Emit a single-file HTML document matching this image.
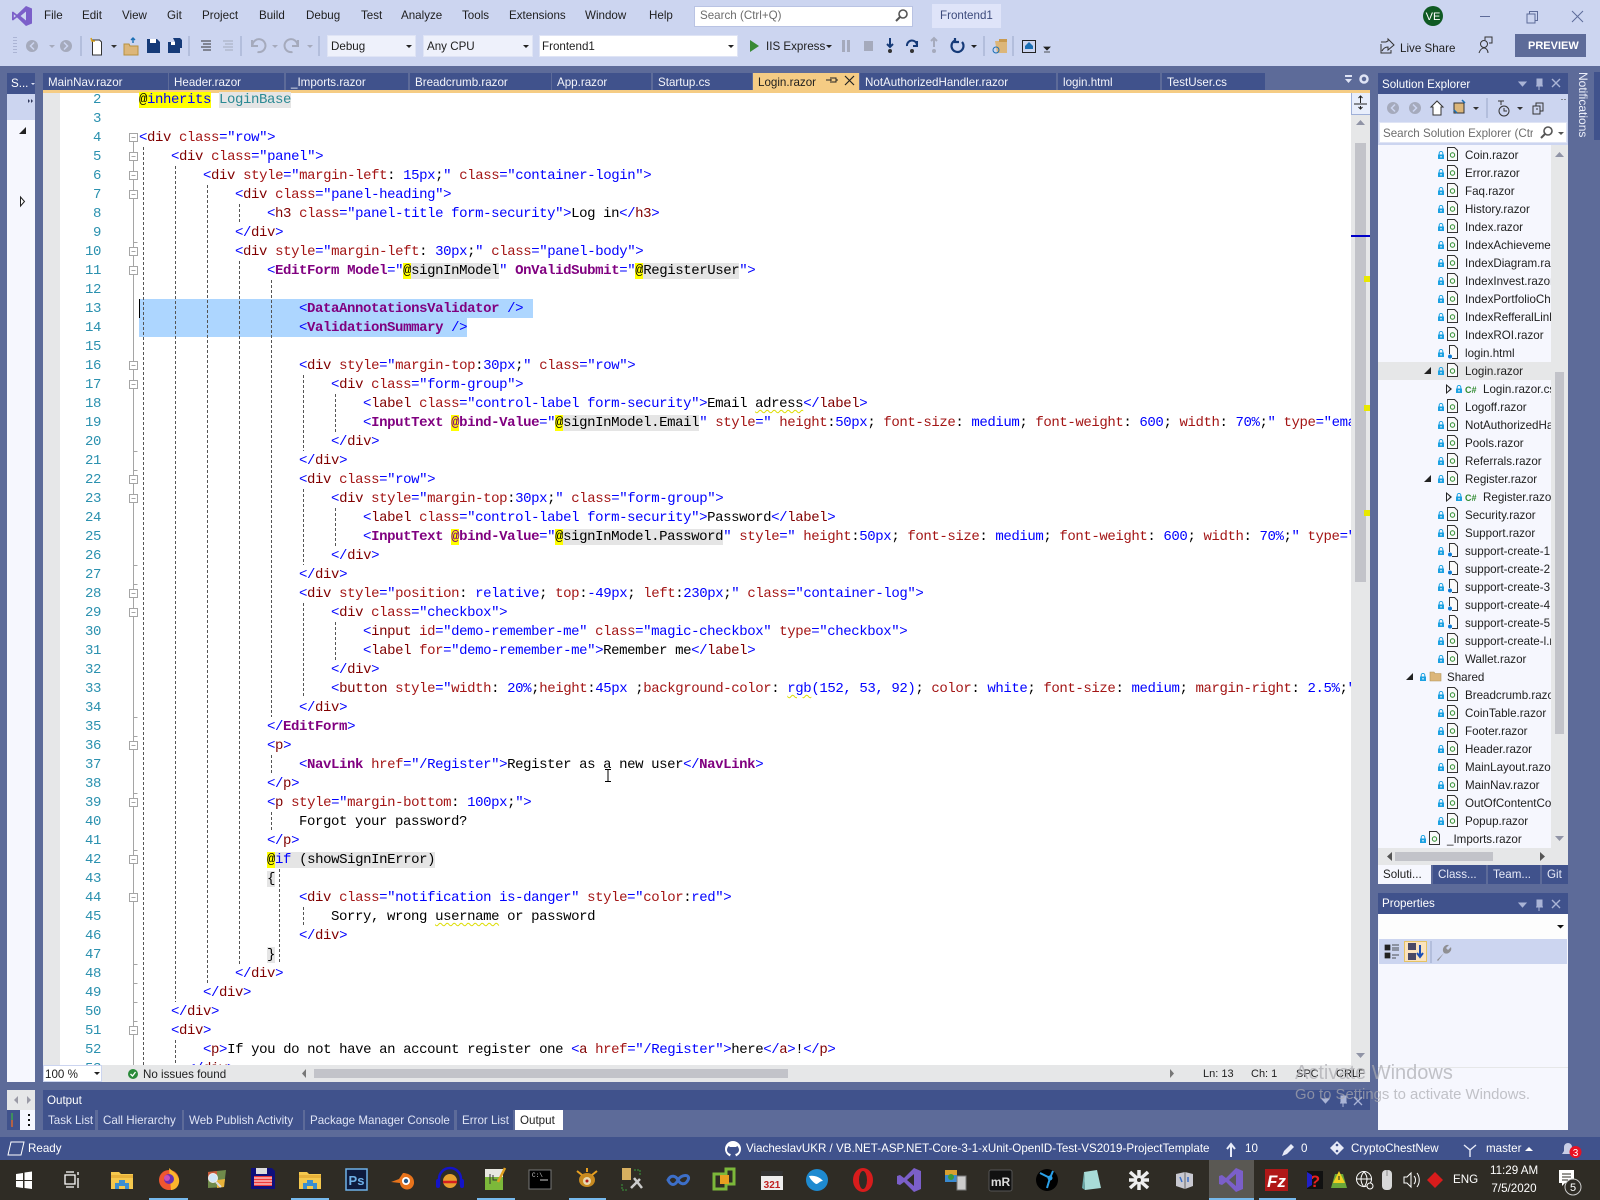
<!DOCTYPE html>
<html><head><meta charset="utf-8"><title>Login.razor - Frontend1</title>
<style>
*{box-sizing:border-box}
html,body{margin:0;padding:0;width:1600px;height:1200px;overflow:hidden;background:#5d6b99;font-family:"Liberation Sans",sans-serif;font-size:11.6px;color:#1e1e1e}
.x{position:absolute;white-space:nowrap;line-height:16px}
.bx{position:absolute}
.tab{position:absolute;top:73px;height:17px;background:#40528c;color:#f4f5fb;line-height:20px;padding-left:5px;white-space:nowrap;overflow:hidden}
.ot{position:absolute;top:1110px;height:20px;background:#40528c;color:#dfe4f5;line-height:21px;padding-left:5px;white-space:nowrap}
.st{position:absolute;top:865px;height:19px;background:#40528c;color:#e8ebf8;line-height:20px;padding-left:5px;white-space:nowrap}
#code,#nums{position:absolute;top:91px;height:974px;overflow:hidden;font:14px/19px "Liberation Mono",monospace;letter-spacing:-.4px;white-space:pre}
#code{left:139px;width:1212px;color:#000}
#nums{left:60px;width:41px;text-align:right;color:#2b91af}
#code div,#nums div{height:19px}
#code b{color:#00f;font-weight:normal}
#code i{color:#800000;font-style:normal}
#code u{color:#a31515;text-decoration:none}
#code s{color:#800080;font-weight:bold;text-decoration:none}
#code mark{background:#ff0;color:#000}
#code var{background:#e5e5e5;font-style:normal}
#code .w{text-decoration:underline wavy #dcdc00 1px;text-underline-offset:2px}
#tree{position:absolute;left:1378px;top:146px;width:173px;height:702px;overflow:hidden;color:#1e1e1e}
.r{margin:0;height:18px;line-height:20px;padding-left:60px;white-space:nowrap;position:relative}
.r svg{display:inline-block;vertical-align:-2px}
.r svg.a{width:6px;height:8px;margin-right:3px;vertical-align:0}
.r svg.c{width:11px;height:14px;margin-right:7px}
.s{padding-left:78px}.o{padding-left:42px}
.h{background:#e6e7e8}
.cs{display:inline-block;width:11px;margin-right:7px;color:#2f8a2f;font-weight:bold;font-size:9px}
.tri{position:absolute;top:5px;width:0;height:0}
.t1{border-left:7px solid transparent;border-bottom:7px solid #222;}
.t2{border-left:6px solid #222;border-top:5px solid transparent;border-bottom:5px solid transparent;top:4px}
.t2:after{content:"";position:absolute;left:-5px;top:-3px;border-left:3.500px solid #f6f7fe;border-top:3px solid transparent;border-bottom:3px solid transparent}
</style></head><body>

<svg width="0" height="0" style="position:absolute"><defs>
<symbol id="lk" viewBox="0 0 6 8"><path d="M1.2 3.5V2.2a1.8 1.8 0 0 1 3.6 0v1.3" fill="none" stroke="#1ba1e2"/><rect y="3.5" width="6" height="4.5" fill="#1ba1e2"/><rect x="2.4" y="5" width="1.2" height="1.5" fill="#fff"/></symbol>
<symbol id="doc" viewBox="0 0 11 14"><path d="M.5.5H7.5L10.5 3.5V13.5H.5Z" fill="#fafafa" stroke="#333"/><circle cx="5.5" cy="8" r="2.2" fill="none" stroke="#2a8a2a"/></symbol>
<symbol id="htm" viewBox="0 0 11 14"><path d="M2.5 9V.5H7.5L10.5 3.5V13.5H5" fill="#fafafa" stroke="#333"/><circle cx="3" cy="11.5" r="2" fill="#0a7ad6"/></symbol>
</defs></svg>

<!-- title / toolbar band -->
<div class="bx" style="left:0;top:0;width:1600px;height:66px;background:#ccd5f0"></div>
<span class="x" style="left:44px;top:8px">File</span>
<span class="x" style="left:82px;top:8px">Edit</span>
<span class="x" style="left:122px;top:8px">View</span>
<span class="x" style="left:167px;top:8px">Git</span>
<span class="x" style="left:202px;top:8px">Project</span>
<span class="x" style="left:259px;top:8px">Build</span>
<span class="x" style="left:306px;top:8px">Debug</span>
<span class="x" style="left:361px;top:8px">Test</span>
<span class="x" style="left:401px;top:8px">Analyze</span>
<span class="x" style="left:462px;top:8px">Tools</span>
<span class="x" style="left:509px;top:8px">Extensions</span>
<span class="x" style="left:585px;top:8px">Window</span>
<span class="x" style="left:649px;top:8px">Help</span>
<div class="bx" style="left:694px;top:6px;width:219px;height:21px;background:#fff;border:1px solid #b9c3e3"></div>
<span class="x" style="left:700px;top:8px;color:#6d6d6d">Search (Ctrl+Q)</span>
<div class="bx" style="left:932px;top:4px;width:69px;height:24px;background:#dfe4f9"></div>
<span class="x" style="left:940px;top:8px;color:#3c4a7c">Frontend1</span>

<div class="bx" style="left:327px;top:35px;width:89px;height:22px;background:#eef1fb;border:1px solid #dfe4f5"></div>
<span class="x" style="left:331px;top:39px">Debug</span>
<div class="bx" style="left:423px;top:35px;width:110px;height:22px;background:#eef1fb;border:1px solid #dfe4f5"></div>
<span class="x" style="left:427px;top:39px">Any CPU</span>
<div class="bx" style="left:539px;top:35px;width:199px;height:22px;background:#fff;border:1px solid #dfe4f5"></div>
<span class="x" style="left:542px;top:39px">Frontend1</span>
<span class="x" style="left:766px;top:39px">IIS Express</span>
<span class="x" style="left:1400px;top:41px">Live Share</span>
<div class="bx" style="left:1515px;top:34px;width:71px;height:23px;background:#5d6b99"></div>
<span class="x" style="left:1528px;top:38px;color:#fff;font-weight:bold;font-size:11px">PREVIEW</span>

<!-- tabs -->
<div class="bx" style="left:7px;top:73px;width:28px;height:21px;background:#40528c"></div>
<span class="x" style="left:11px;top:76px;color:#fff">S...</span>
<div class="tab" style="left:43px;width:125px">MainNav.razor</div>
<div class="tab" style="left:169px;width:115px">Header.razor</div>
<div class="tab" style="left:286px;width:122px">_Imports.razor</div>
<div class="tab" style="left:410px;width:141px">Breadcrumb.razor</div>
<div class="tab" style="left:552px;width:99px">App.razor</div>
<div class="tab" style="left:653px;width:99px">Startup.cs</div>
<div class="tab" style="left:753px;width:106px;background:#f5cc84;color:#1e1e1e;line-height:20px">Login.razor</div>
<div class="tab" style="left:860px;width:196px">NotAuthorizedHandler.razor</div>
<div class="tab" style="left:1058px;width:102px">login.html</div>
<div class="tab" style="left:1162px;width:103px">TestUser.cs</div>
<div class="bx" style="left:43px;top:90px;width:1327px;height:3px;background:#f5cc84"></div>

<!-- left rail -->
<div class="bx" style="left:7px;top:94px;width:28px;height:26px;background:#ccd5f0"></div>
<div class="bx" style="left:7px;top:120px;width:28px;height:962px;background:#f6f7fe"></div>
<div class="bx" style="left:7px;top:1090px;width:28px;height:20px;background:#e6e7e8"></div>
<div class="bx" style="left:7px;top:1110px;width:13px;height:20px;background:#40528c"></div>
<div class="bx" style="left:20px;top:1110px;width:15px;height:20px;background:#f6f7fe"></div>

<!-- editor -->
<div class="bx" style="left:43px;top:93px;width:1308px;height:972px;background:#fff"></div>
<div class="bx" style="left:43px;top:93px;width:17px;height:972px;background:#e6e7e8"></div>
<div class="bx" style="left:139px;top:299px;width:394px;height:19px;background:#add6ff"></div>
<div class="bx" style="left:139px;top:318px;width:328px;height:19px;background:#add6ff"></div>

<div id="nums"><div>2</div><div>3</div><div>4</div><div>5</div><div>6</div><div>7</div><div>8</div><div>9</div><div>10</div><div>11</div><div>12</div><div>13</div><div>14</div><div>15</div><div>16</div><div>17</div><div>18</div><div>19</div><div>20</div><div>21</div><div>22</div><div>23</div><div>24</div><div>25</div><div>26</div><div>27</div><div>28</div><div>29</div><div>30</div><div>31</div><div>32</div><div>33</div><div>34</div><div>35</div><div>36</div><div>37</div><div>38</div><div>39</div><div>40</div><div>41</div><div>42</div><div>43</div><div>44</div><div>45</div><div>46</div><div>47</div><div>48</div><div>49</div><div>50</div><div>51</div><div>52</div><div>53</div></div>

<svg class="bx" style="left:0;top:0" width="1600" height="1065" viewBox="0 0 1600 1065">
<g stroke="#555" stroke-width="1" stroke-dasharray="3 2" fill="none">
<path d="M143.5 147V1065M175.5 166V1002M175.5 1040V1065M207.5 185V983M239.5 204V223M239.5 261V964M271.5 280V717M271.5 755V774M271.5 812V831M279.5 869V964M303.5 375V451M303.5 489V565M303.5 603V698M303.5 907V926M335.5 394V432M335.5 508V546M335.5 622V660"/>
</g>
<g stroke="#a5a5a5" fill="#fff">
<path d="M133.5 142V1065" fill="none"/>
<path d="M133.5 242.5h4M133.5 451.5h4M133.5 470.5h4M133.5 565.5h4M133.5 584.5h4M133.5 717.5h4M133.5 736.5h4M133.5 793.5h4M133.5 850.5h4M133.5 964.5h4M133.5 983.5h4M133.5 1002.5h4M133.5 1021.5h4" fill="none"/>
<g id="bxs">
<path d="M129.5 133.5h8v8h-8zM131.5 137.5h4"/><path d="M129.5 152.5h8v8h-8zM131.5 156.5h4"/><path d="M129.5 171.5h8v8h-8zM131.5 175.5h4"/><path d="M129.5 190.5h8v8h-8zM131.5 194.5h4"/><path d="M129.5 247.5h8v8h-8zM131.5 251.5h4"/><path d="M129.5 266.5h8v8h-8zM131.5 270.5h4"/><path d="M129.5 361.5h8v8h-8zM131.5 365.5h4"/><path d="M129.5 380.5h8v8h-8zM131.5 384.5h4"/><path d="M129.5 475.5h8v8h-8zM131.5 479.5h4"/><path d="M129.5 494.5h8v8h-8zM131.5 498.5h4"/><path d="M129.5 589.5h8v8h-8zM131.5 593.5h4"/><path d="M129.5 608.5h8v8h-8zM131.5 612.5h4"/><path d="M129.5 741.5h8v8h-8zM131.5 745.5h4"/><path d="M129.5 798.5h8v8h-8zM131.5 802.5h4"/><path d="M129.5 855.5h8v8h-8zM131.5 859.5h4"/><path d="M129.5 893.5h8v8h-8zM131.5 897.5h4"/><path d="M129.5 1026.5h8v8h-8zM131.5 1030.5h4"/>
</g></g>
</svg>

<div id="code"><div><mark>@<b>inherits</b></mark> <var style="color:#2b8a94">LoginBase</var></div><div> </div><div><b>&lt;</b><i>div</i> <u>class</u><b>="row"&gt;</b></div><div>    <b>&lt;</b><i>div</i> <u>class</u><b>="panel"&gt;</b></div><div>        <b>&lt;</b><i>div</i> <u>style</u><b>="</b><u>margin-left</u>: <b>15px</b>;<b>"</b> <u>class</u><b>="container-login"&gt;</b></div><div>            <b>&lt;</b><i>div</i> <u>class</u><b>="panel-heading"&gt;</b></div><div>                <b>&lt;</b><i>h3</i> <u>class</u><b>="panel-title form-security"&gt;</b>Log in<b>&lt;/</b><i>h3</i><b>&gt;</b></div><div>            <b>&lt;/</b><i>div</i><b>&gt;</b></div><div>            <b>&lt;</b><i>div</i> <u>style</u><b>="</b><u>margin-left</u>: <b>30px</b>;<b>"</b> <u>class</u><b>="panel-body"&gt;</b></div><div>                <b>&lt;</b><s>EditForm</s> <s>Model</s><b>="</b><mark>@</mark><var>signInModel</var><b>"</b> <s>OnValidSubmit</s><b>="</b><mark>@</mark><var>RegisterUser</var><b>"&gt;</b></div><div> </div><div>                    <b>&lt;</b><s>DataAnnotationsValidator</s> <b>/&gt;</b></div><div>                    <b>&lt;</b><s>ValidationSummary</s> <b>/&gt;</b></div><div> </div><div>                    <b>&lt;</b><i>div</i> <u>style</u><b>="</b><u>margin-top</u>:<b>30px</b>;<b>"</b> <u>class</u><b>="row"&gt;</b></div><div>                        <b>&lt;</b><i>div</i> <u>class</u><b>="form-group"&gt;</b></div><div>                            <b>&lt;</b><i>label</i> <u>class</u><b>="control-label form-security"&gt;</b>Email <span class="w">adress</span><b>&lt;/</b><i>label</i><b>&gt;</b></div><div>                            <b>&lt;</b><s>InputText</s> <mark><s>@</s></mark><s>bind-Value</s><b>="</b><mark>@</mark><var>signInModel.Email</var><b>"</b> <u>style</u><b>="</b> <u>height</u>:<b>50px</b>; <u>font-size</u>: <b>medium</b>; <u>font-weight</u>: <b>600</b>; <u>width</u>: <b>70%</b>;<b>"</b> <u>type</u><b>="email"</b></div><div>                        <b>&lt;/</b><i>div</i><b>&gt;</b></div><div>                    <b>&lt;/</b><i>div</i><b>&gt;</b></div><div>                    <b>&lt;</b><i>div</i> <u>class</u><b>="row"&gt;</b></div><div>                        <b>&lt;</b><i>div</i> <u>style</u><b>="</b><u>margin-top</u>:<b>30px</b>;<b>"</b> <u>class</u><b>="form-group"&gt;</b></div><div>                            <b>&lt;</b><i>label</i> <u>class</u><b>="control-label form-security"&gt;</b>Password<b>&lt;/</b><i>label</i><b>&gt;</b></div><div>                            <b>&lt;</b><s>InputText</s> <mark><s>@</s></mark><s>bind-Value</s><b>="</b><mark>@</mark><var>signInModel.Password</var><b>"</b> <u>style</u><b>="</b> <u>height</u>:<b>50px</b>; <u>font-size</u>: <b>medium</b>; <u>font-weight</u>: <b>600</b>; <u>width</u>: <b>70%</b>;<b>"</b> <u>type</u><b>="password"</b></div><div>                        <b>&lt;/</b><i>div</i><b>&gt;</b></div><div>                    <b>&lt;/</b><i>div</i><b>&gt;</b></div><div>                    <b>&lt;</b><i>div</i> <u>style</u><b>="</b><u>position</u>: <b>relative</b>; <u>top</u>:<b>-49px</b>; <u>left</u>:<b>230px</b>;<b>"</b> <u>class</u><b>="container-log"&gt;</b></div><div>                        <b>&lt;</b><i>div</i> <u>class</u><b>="checkbox"&gt;</b></div><div>                            <b>&lt;</b><i>input</i> <u>id</u><b>="demo-remember-me"</b> <u>class</u><b>="magic-checkbox"</b> <u>type</u><b>="checkbox"&gt;</b></div><div>                            <b>&lt;</b><i>label</i> <u>for</u><b>="demo-remember-me"&gt;</b>Remember me<b>&lt;/</b><i>label</i><b>&gt;</b></div><div>                        <b>&lt;/</b><i>div</i><b>&gt;</b></div><div>                        <b>&lt;</b><i>button</i> <u>style</u><b>="</b><u>width</u>: <b>20%</b>;<u>height</u>:<b>45px</b> ;<u>background-color</u>: <b><span class="w">rgb</span>(152, 53, 92)</b>; <u>color</u>: <b>white</b>; <u>font-size</u>: <b>medium</b>; <u>margin-right</u>: <b>2.5%</b>;<b>"</b> <u>type</u></div><div>                    <b>&lt;/</b><i>div</i><b>&gt;</b></div><div>                <b>&lt;/</b><s>EditForm</s><b>&gt;</b></div><div>                <b>&lt;</b><i>p</i><b>&gt;</b></div><div>                    <b>&lt;</b><s>NavLink</s> <u>href</u><b>="/Register"&gt;</b>Register as a new user<b>&lt;/</b><s>NavLink</s><b>&gt;</b></div><div>                <b>&lt;/</b><i>p</i><b>&gt;</b></div><div>                <b>&lt;</b><i>p</i> <u>style</u><b>="</b><u>margin-bottom</u>: <b>100px</b>;<b>"&gt;</b></div><div>                    Forgot your password?</div><div>                <b>&lt;/</b><i>p</i><b>&gt;</b></div><div>                <mark>@</mark><var><b>if</b> (showSignInError)</var></div><div>                <var>{</var></div><div>                    <b>&lt;</b><i>div</i> <u>class</u><b>="notification is-danger"</b> <u>style</u><b>="</b><u>color</u>:<b>red</b><b>"&gt;</b></div><div>                        Sorry, wrong <span class="w">username</span> or password</div><div>                    <b>&lt;/</b><i>div</i><b>&gt;</b></div><div>                <var>}</var></div><div>            <b>&lt;/</b><i>div</i><b>&gt;</b></div><div>        <b>&lt;/</b><i>div</i><b>&gt;</b></div><div>    <b>&lt;/</b><i>div</i><b>&gt;</b></div><div>    <b>&lt;</b><i>div</i><b>&gt;</b></div><div>        <b>&lt;</b><i>p</i><b>&gt;</b>If you do not have an account register one <b>&lt;</b><i>a</i> <u>href</u><b>="/Register"&gt;</b>here<b>&lt;/</b><i>a</i><b>&gt;</b>!<b>&lt;/</b><i>p</i><b>&gt;</b></div><div>      <b>&lt;/</b><i>div</i><b>&gt;</b></div></div>

<!-- scrollbar -->
<div class="bx" style="left:1351px;top:93px;width:19px;height:972px;background:#e6e7e8"></div>
<div class="bx" style="left:1351px;top:93px;width:19px;height:22px;background:#e8eefc;border-left:1px solid #9fb0d8;border-bottom:1px solid #9fb0d8"></div>
<div class="bx" style="left:1355px;top:143px;width:11px;height:439px;background:#c2c3c9"></div>
<div class="bx" style="left:1351px;top:235px;width:19px;height:2px;background:#0000c8"></div>
<div class="bx" style="left:1364px;top:276px;width:6px;height:6px;background:#e8e800"></div>
<div class="bx" style="left:1364px;top:405px;width:6px;height:6px;background:#e8e800"></div>
<div class="bx" style="left:1364px;top:510px;width:6px;height:6px;background:#e8e800"></div>

<!-- editor status strip -->
<div class="bx" style="left:43px;top:1065px;width:1327px;height:17px;background:#e6e7e8"></div>
<div class="bx" style="left:43px;top:1065px;width:59px;height:17px;background:#fff;border:1px solid #ccd5f0"></div>
<span class="x" style="left:45px;top:1067px">100 %</span>
<span class="x" style="left:143px;top:1067px">No issues found</span>
<div class="bx" style="left:314px;top:1069px;width:474px;height:9px;background:#c2c3c9"></div>
<span class="x" style="left:1203px;top:1066px;font-size:11px">Ln: 13</span>
<span class="x" style="left:1251px;top:1066px;font-size:11px">Ch: 1</span>
<span class="x" style="left:1296px;top:1066px;font-size:11px">SPC</span>
<span class="x" style="left:1336px;top:1066px;font-size:11px">CRLF</span>

<!-- output -->
<div class="bx" style="left:43px;top:1090px;width:1327px;height:20px;background:#40528c"></div>
<span class="x" style="left:47px;top:1093px;color:#fff">Output</span>
<div class="ot" style="left:43px;width:52px">Task List</div>
<div class="ot" style="left:98px;width:84px">Call Hierarchy</div>
<div class="ot" style="left:184px;width:119px">Web Publish Activity</div>
<div class="ot" style="left:305px;width:149px">Package Manager Console</div>
<div class="ot" style="left:457px;width:56px">Error List</div>
<div class="ot" style="left:515px;width:48px;background:#fff;color:#1e1e1e">Output</div>

<!-- solution explorer -->
<div class="bx" style="left:1378px;top:73px;width:190px;height:21px;background:#40528c"></div>
<span class="x" style="left:1382px;top:77px;color:#fff">Solution Explorer</span>
<div class="bx" style="left:1378px;top:94px;width:190px;height:51px;background:#ccd5f0"></div>
<div class="bx" style="left:1379px;top:122px;width:188px;height:21px;background:#fff;border:1px solid #dfe4f5"></div>
<span class="x" style="left:1383px;top:126px;width:150px;overflow:hidden;color:#6d6d6d">Search Solution Explorer (Ctrl+;)</span>
<div class="bx" style="left:1378px;top:145px;width:173px;height:703px;background:#f6f7fe"></div>
<div class="bx" style="left:1551px;top:145px;width:17px;height:703px;background:#e6e7e8"></div>
<div class="bx" style="left:1555px;top:372px;width:9px;height:362px;background:#c2c3c9"></div>
<div id="tree">
<p class="r"><svg class="a"><use href="#lk"/></svg><svg class="c"><use href="#doc"/></svg>Coin.razor</p>
<p class="r"><svg class="a"><use href="#lk"/></svg><svg class="c"><use href="#doc"/></svg>Error.razor</p>
<p class="r"><svg class="a"><use href="#lk"/></svg><svg class="c"><use href="#doc"/></svg>Faq.razor</p>
<p class="r"><svg class="a"><use href="#lk"/></svg><svg class="c"><use href="#doc"/></svg>History.razor</p>
<p class="r"><svg class="a"><use href="#lk"/></svg><svg class="c"><use href="#doc"/></svg>Index.razor</p>
<p class="r"><svg class="a"><use href="#lk"/></svg><svg class="c"><use href="#doc"/></svg>IndexAchievement.razor</p>
<p class="r"><svg class="a"><use href="#lk"/></svg><svg class="c"><use href="#doc"/></svg>IndexDiagram.razor</p>
<p class="r"><svg class="a"><use href="#lk"/></svg><svg class="c"><use href="#doc"/></svg>IndexInvest.razor</p>
<p class="r"><svg class="a"><use href="#lk"/></svg><svg class="c"><use href="#doc"/></svg>IndexPortfolioChart.razor</p>
<p class="r"><svg class="a"><use href="#lk"/></svg><svg class="c"><use href="#doc"/></svg>IndexRefferalLink.razor</p>
<p class="r"><svg class="a"><use href="#lk"/></svg><svg class="c"><use href="#doc"/></svg>IndexROI.razor</p>
<p class="r"><svg class="a"><use href="#lk"/></svg><svg class="c"><use href="#htm"/></svg>login.html</p>
<p class="r h"><span class="tri t1" style="left:46px"></span><svg class="a"><use href="#lk"/></svg><svg class="c"><use href="#doc"/></svg>Login.razor</p>
<p class="r s"><span class="tri t2" style="left:68px"></span><svg class="a"><use href="#lk"/></svg><span class="cs">C#</span>Login.razor.cs</p>
<p class="r"><svg class="a"><use href="#lk"/></svg><svg class="c"><use href="#doc"/></svg>Logoff.razor</p>
<p class="r"><svg class="a"><use href="#lk"/></svg><svg class="c"><use href="#doc"/></svg>NotAuthorizedHandler.razor</p>
<p class="r"><svg class="a"><use href="#lk"/></svg><svg class="c"><use href="#doc"/></svg>Pools.razor</p>
<p class="r"><svg class="a"><use href="#lk"/></svg><svg class="c"><use href="#doc"/></svg>Referrals.razor</p>
<p class="r"><span class="tri t1" style="left:46px"></span><svg class="a"><use href="#lk"/></svg><svg class="c"><use href="#doc"/></svg>Register.razor</p>
<p class="r s"><span class="tri t2" style="left:68px"></span><svg class="a"><use href="#lk"/></svg><span class="cs">C#</span>Register.razor.cs</p>
<p class="r"><svg class="a"><use href="#lk"/></svg><svg class="c"><use href="#doc"/></svg>Security.razor</p>
<p class="r"><svg class="a"><use href="#lk"/></svg><svg class="c"><use href="#doc"/></svg>Support.razor</p>
<p class="r"><svg class="a"><use href="#lk"/></svg><svg class="c"><use href="#htm"/></svg>support-create-1.html</p>
<p class="r"><svg class="a"><use href="#lk"/></svg><svg class="c"><use href="#htm"/></svg>support-create-2.html</p>
<p class="r"><svg class="a"><use href="#lk"/></svg><svg class="c"><use href="#htm"/></svg>support-create-3.html</p>
<p class="r"><svg class="a"><use href="#lk"/></svg><svg class="c"><use href="#htm"/></svg>support-create-4.html</p>
<p class="r"><svg class="a"><use href="#lk"/></svg><svg class="c"><use href="#htm"/></svg>support-create-5.html</p>
<p class="r"><svg class="a"><use href="#lk"/></svg><svg class="c"><use href="#doc"/></svg>support-create-l.razor</p>
<p class="r"><svg class="a"><use href="#lk"/></svg><svg class="c"><use href="#doc"/></svg>Wallet.razor</p>
<p class="r o"><span class="tri t1" style="left:28px"></span><svg class="a"><use href="#lk"/></svg><svg class="c" viewBox="0 0 11 14" style="width:13px;margin-right:5px"><path d="M0 3H4L5 4.5H11V12H0Z" fill="#dcb67a" stroke="#b0935a" stroke-width=".6"/></svg>Shared</p>
<p class="r"><svg class="a"><use href="#lk"/></svg><svg class="c"><use href="#doc"/></svg>Breadcrumb.razor</p>
<p class="r"><svg class="a"><use href="#lk"/></svg><svg class="c"><use href="#doc"/></svg>CoinTable.razor</p>
<p class="r"><svg class="a"><use href="#lk"/></svg><svg class="c"><use href="#doc"/></svg>Footer.razor</p>
<p class="r"><svg class="a"><use href="#lk"/></svg><svg class="c"><use href="#doc"/></svg>Header.razor</p>
<p class="r"><svg class="a"><use href="#lk"/></svg><svg class="c"><use href="#doc"/></svg>MainLayout.razor</p>
<p class="r"><svg class="a"><use href="#lk"/></svg><svg class="c"><use href="#doc"/></svg>MainNav.razor</p>
<p class="r"><svg class="a"><use href="#lk"/></svg><svg class="c"><use href="#doc"/></svg>OutOfContentCoin.razor</p>
<p class="r"><svg class="a"><use href="#lk"/></svg><svg class="c"><use href="#doc"/></svg>Popup.razor</p>
<p class="r o"><svg class="a"><use href="#lk"/></svg><svg class="c"><use href="#doc"/></svg>_Imports.razor</p>
</div>
<div class="bx" style="left:1378px;top:848px;width:190px;height:17px;background:#e6e7e8"></div>
<div class="bx" style="left:1395px;top:852px;width:98px;height:9px;background:#c2c3c9"></div>
<div class="st" style="left:1378px;width:53px;background:#f6f7fe;color:#1e1e1e">Soluti...</div>
<div class="st" style="left:1433px;width:53px">Class...</div>
<div class="st" style="left:1488px;width:52px">Team...</div>
<div class="st" style="left:1542px;width:26px">Git</div>

<!-- properties -->
<div class="bx" style="left:1378px;top:893px;width:190px;height:21px;background:#40528c"></div>
<span class="x" style="left:1382px;top:896px;color:#fff">Properties</span>
<div class="bx" style="left:1378px;top:914px;width:190px;height:216px;background:#f6f7fe"></div>
<div class="bx" style="left:1379px;top:914px;width:188px;height:25px;background:#fdfdfd"></div>
<div class="bx" style="left:1379px;top:939px;width:188px;height:25px;background:#ccd5f0"></div>
<div class="bx" style="left:1378px;top:1067px;width:190px;height:1px;background:#e6e7e8"></div>
<div class="bx" style="left:1404px;top:941px;width:23px;height:21px;background:#fbe3bd;border:1px solid #e5c365"></div>

<!-- notifications -->
<div class="bx" style="left:1594px;top:72px;width:6px;height:68px;background:#40528c"></div>
<span class="bx" style="left:1575px;top:72px;writing-mode:vertical-rl;color:#eceffa;font-size:12px;line-height:16px;white-space:nowrap">Notifications</span>

<!-- status bar -->
<div class="bx" style="left:0;top:1137px;width:1600px;height:23px;background:#40528c"></div>
<span class="x" style="left:28px;top:1141px;color:#fff">Ready</span>
<span class="x" style="left:746px;top:1141px;color:#fff">ViacheslavUKR / VB.NET-ASP.NET-Core-3-1-xUnit-OpenID-Test-VS2019-ProjectTemplate</span>
<span class="x" style="left:1245px;top:1141px;color:#fff">10</span>
<span class="x" style="left:1301px;top:1141px;color:#fff">0</span>
<span class="x" style="left:1351px;top:1141px;color:#fff">CryptoChestNew</span>
<span class="x" style="left:1486px;top:1141px;color:#fff">master</span>

<!-- taskbar -->
<div class="bx" style="left:0;top:1160px;width:1600px;height:40px;background:#2f2c25"></div>
<div class="bx" style="left:1209px;top:1160px;width:45px;height:40px;background:#5a5853"></div>
<div class="bx" style="left:149px;top:1198px;width:39px;height:2px;background:#76b9ed"></div>
<div class="bx" style="left:291px;top:1198px;width:38px;height:2px;background:#76b9ed"></div>
<div class="bx" style="left:477px;top:1198px;width:38px;height:2px;background:#76b9ed"></div>
<div class="bx" style="left:569px;top:1198px;width:37px;height:2px;background:#76b9ed"></div>
<div class="bx" style="left:1209px;top:1198px;width:45px;height:2px;background:#76b9ed"></div>
<div class="bx" style="left:1259px;top:1198px;width:37px;height:2px;background:#76b9ed"></div>
<span class="x" style="left:1453px;top:1172px;color:#fff">ENG</span>
<span class="x" style="left:1490px;top:1163px;width:48px;text-align:center;color:#fff">11:29 AM</span>
<span class="x" style="left:1490px;top:1181px;width:48px;text-align:center;color:#fff">7/5/2020</span>

<!-- icons -->
<svg class="bx" style="left:0;top:0" width="1600" height="1200" viewBox="0 0 1600 1200">
<!-- VS logo -->
<path fill-rule="evenodd" fill="#7b5fc9" d="M26 6L17 14.6L13 11.5L12 12V20L13 20.5L17 17.4L26 26L32 23.5V8.5ZM26 11.5V20.5L20.5 16ZM13.8 14.2L16 16L13.8 17.8Z"/>
<!-- search magnifier -->
<circle cx="903" cy="14" r="4" fill="none" stroke="#555" stroke-width="1.6"/><path d="M900 17l-4 4" stroke="#555" stroke-width="2"/>
<!-- VE avatar -->
<circle cx="1433" cy="16" r="10" fill="#0f5a23"/><text x="1433" y="20" font-family="Liberation Sans" font-size="11" fill="#fff" text-anchor="middle">VE</text>
<path d="M1480 16.5h10" stroke="#5d6b99"/><path d="M1527 14h8v9h-8zM1529.5 14v-2.5h8v9h-2.5" fill="none" stroke="#5d6b99"/><path d="M1572 11l11 11M1583 11l-11 11" stroke="#5d6b99"/>
<!-- toolbar -->
<path d="M14 37v16M16 37v16" stroke="#8a94b8" stroke-dasharray="1 2"/>
<circle cx="32" cy="46" r="6" fill="#a5aabc"/><path d="M34 42.500l-3.500 3.500 3.500 3.500" fill="none" stroke="#ccd5f0" stroke-width="1.500"/><path d="M49 45h6l-3 3z" fill="#a5aabc"/><circle cx="66" cy="46" r="6" fill="#a5aabc"/><path d="M64 42.500l3.500 3.500-3.500 3.500" fill="none" stroke="#ccd5f0" stroke-width="1.500"/>
<path d="M81 36v20M189 36v20M241 36v20M319 36v20" stroke="#9aa6c9"/>
<path d="M92.500 40h7l2 2v13h-9z" fill="#fff" stroke="#333"/><path d="M91 38l1 3 3 0" stroke="#d9a21b" stroke-width="1.5" fill="none"/><path d="M111 45h6l-3 3z" fill="#333"/>
<path d="M124 44h5l1 2h8v9h-14z" fill="#dcb67a" stroke="#b8913f"/><path d="M133 43v-5m-2 2l2-2 2 2" stroke="#1b6fb5" fill="none" stroke-width="1.4"/>
<path d="M147 39h10l3 3v11h-13z" fill="#153a78"/><rect x="150" y="39" width="6" height="4" fill="#fff"/>
<path d="M168 42h10l2 2v9h-12z" fill="#153a78"/><path d="M173 38h7l2 2v8h-4" fill="#153a78"/><rect x="171" y="42" width="4" height="3" fill="#fff"/>
<path d="M201 41h10M203 44h8M201 47h10M203 50h8" stroke="#333"/><path d="M223 41h10M225 44h8M223 47h10M225 50h8" stroke="#a5aabc"/>
<path d="M252 40v6h6M252.500 45a6.500 6.500 0 1 1 5 7" fill="none" stroke="#a5aabc" stroke-width="2"/><path d="M272 45h6l-3 3z" fill="#a5aabc"/>
<path d="M298 40v6h-6M297.500 45a6.500 6.500 0 1 0-5 7" fill="none" stroke="#a5aabc" stroke-width="2"/><path d="M307 45h6l-3 3z" fill="#a5aabc"/>
<path d="M406 45h6l-3 3zM523 45h6l-3 3zM728 45h6l-3 3zM826 45h6l-3 3zM971 45h6l-3 3z" fill="#222"/>
<path d="M750 40l9 6-9 6z" fill="#388a34"/>
<path d="M842 40h3v12h-3zM847 40h3v12h-3zM864 41h9v10h-9z" fill="#a5aabc"/>
<path d="M890 38v9m-3-3l3 3 3-3" stroke="#153a78" fill="none" stroke-width="2"/><circle cx="890" cy="51" r="2" fill="#333"/>
<path d="M907 46a5 5 0 0 1 10-1m0-4v5h-4" stroke="#153a78" fill="none" stroke-width="2"/><circle cx="912" cy="51" r="2" fill="#333"/>
<path d="M934 47v-9m-3 3l3-3 3 3" stroke="#a5aabc" fill="none" stroke-width="2"/><circle cx="934" cy="51" r="2" fill="#a5aabc"/>
<path d="M962 42a6 6 0 1 1-7-1.500m0-2.500v4h4" stroke="#153a78" fill="none" stroke-width="2.200"/>
<path d="M984 36v20M1013 36v20" stroke="#9aa6c9"/>
<path d="M995 41h12v12h-10z" fill="#dcb67a"/><path d="M999 39h8v3h-8z" fill="#c99a4f"/><circle cx="996" cy="50" r="3" fill="none" stroke="#1b6fb5"/>
<rect x="1022.500" y="40.500" width="13" height="12" fill="none" stroke="#222"/><path d="M1029 42l4 4v3h-8v-3z" fill="#1b6fb5"/>
<path d="M1044 47h6l-3 3zM1044 52h6" fill="#222" stroke="#222" stroke-width=".8"/>
<!-- live share + feedback -->
<path d="M1381 42h5l2-1v-2l6 6-6 5v-3c-3 0-5 2-6 4M1381 44v9h10v-3" fill="none" stroke="#333"/>
<circle cx="1484" cy="44" r="3.500" fill="none" stroke="#333"/><path d="M1479 53c1-3 3-5 5-5s4 2 4 5" fill="none" stroke="#333"/><path d="M1485 40v-3h7v6h-3" fill="none" stroke="#333"/>
<path d="M1345 75h7v2h-7zM1345 79h7l-3.500 4z" fill="#dfe4f5"/><circle cx="1364" cy="79" r="3.500" fill="none" stroke="#dfe4f5" stroke-width="2.500"/>
<!-- pin/close tab -->
<path d="M826 80h5M831 77v6M832 78h4v4h-4M836 80h2" stroke="#222" fill="none"/><path d="M845 76l9 9M854 76l-9 9" stroke="#222" stroke-width="1.200"/>
<!-- rail -->
<path d="M31 83h4l-2 2z" fill="#dfe4f5"/><path d="M28 99l2 2-2 2zM31 99l2 2-2 2z" fill="#30395c"/><path d="M26 127v7h-7z" fill="#222"/><path d="M20.500 197l4 4.500-4 4.500z" fill="#fff" stroke="#222"/>
<!-- editor scroll -->
<path d="M1360.500 96v7m-2-5l2-2 2 2M1360.500 109v-3m-2 1l2 2 2-2M1354 104h13" fill="none" stroke="#222"/><path d="M1356 125l4.500-5 4.500 5zM1356 1053l4.500 5 4.500-5z" fill="#9094a6"/>
<!-- solution explorer chrome -->
<path d="M1519 82h7l-3.500 4zM1539 90v-4M1536 86h7M1537 86v-7h5v7" stroke="#aab4d6" fill="#aab4d6"/><path d="M1552 79l8 8M1560 79l-8 8" stroke="#aab4d6" stroke-width="1.400"/>
<circle cx="1393" cy="108" r="6" fill="#a5aabc"/><path d="M1395 104.500l-3.500 3.500 3.500 3.500" fill="none" stroke="#ccd5f0" stroke-width="1.500"/><circle cx="1415" cy="108" r="6" fill="#a5aabc"/><path d="M1413 104.500l3.500 3.500-3.500 3.500" fill="none" stroke="#ccd5f0" stroke-width="1.500"/>
<path d="M1437 101l-6 6h2v8h8v-8h2z" fill="#fff" stroke="#333"/><path d="M1454 103h10v10h-10z" fill="#dcb67a" stroke="#333"/><path d="M1454 110l3 3M1462 100l3 3" stroke="#1b6fb5" stroke-width="1.500"/><path d="M1473 107h6l-3 3zM1517 107h6l-3 3zM1561 99h2l-1 1zM1564 99h2l-1 1z" fill="#333"/>
<path d="M1487 98v20" stroke="#9aa6c9"/><circle cx="1504" cy="111" r="5" fill="none" stroke="#333"/><path d="M1504 108v3h3M1498 101h6M1501 101v4" stroke="#333" fill="none"/><path d="M1533 106h7v8h-7zM1536 106v-3h7v8h-3" fill="none" stroke="#333"/><path d="M1536 109h2" stroke="#333"/>
<circle cx="1548" cy="131" r="4" fill="none" stroke="#555" stroke-width="1.600"/><path d="M1545 134l-4 4" stroke="#555" stroke-width="2"/><path d="M1558 132h6l-3 3z" fill="#555"/>
<path d="M1555 157l4.500-5 4.500 5zM1555 836l4.500 5 4.500-5z" fill="#9094a6"/><path d="M1392 852v9l-5-4.500zM1540 852v9l5-4.500z" fill="#555"/>
<!-- properties chrome -->
<path d="M1519 903h7l-3.500 4zM1539 911v-4M1536 907h7M1537 907v-7h5v7" stroke="#aab4d6" fill="#aab4d6"/><path d="M1552 900l8 8M1560 900l-8 8" stroke="#aab4d6" stroke-width="1.400"/>
<path d="M1557 925h7l-3.500 3.500z" fill="#111"/>
<path d="M1385 945h5v5h-5zM1385 953h5v5h-5zM1392 945h7M1392 948h7M1392 950h7M1392 955h7M1392 958h4" fill="#222" stroke="#222" stroke-width=".7"/>
<rect x="1408" y="943" width="8" height="7" fill="#4a4a66"/><rect x="1408" y="953" width="8" height="7" fill="#4a4a66"/><path d="M1420 945v12m-3-4l3 4 3-4" stroke="#1b4fb5" stroke-width="2" fill="none"/>
<path d="M1431 941v22" stroke="#9aa6c9"/><path d="M1437 960l7-7a5 5 0 0 1 5-8l-3 3 2 2 3-3a5 5 0 0 1-7 6l-6 8z" fill="#8f8f93"/>
<!-- editor status -->
<path d="M94 1072h6l-3 3z" fill="#222"/><circle cx="133" cy="1074" r="5" fill="#2a8a3a"/><path d="M130.500 1074l2 2 3-4" stroke="#fff" fill="none" stroke-width="1.300"/><path d="M306 1069v9l-4-4.500zM1170 1069v9l4-4.500z" fill="#777"/>
<!-- output chrome -->
<path d="M18 1096v8l-4-4zM27 1096v8l4-4z" fill="#9a9aa5"/>
<path d="M12 1113v14" stroke="#3da34f" stroke-width="1.500"/><path d="M12 1120v7" stroke="#d85a3a" stroke-width="1.500"/><path d="M28 1115h2M28 1120h2M28 1125h2" stroke="#111" stroke-width="2"/>
<path d="M1322 1099h7l-3.500 4zM1343 1107v-4M1340 1103h7M1341 1103v-7h5v7" stroke="#aab4d6" fill="#aab4d6"/><path d="M1354 1097l8 8M1362 1097l-8 8" stroke="#aab4d6" stroke-width="1.300"/>
<!-- I-beam + caret -->
<path d="M605 769.500h6M605 781.500h6M608 770v11" stroke="#000"/><path d="M139.500 299v19" stroke="#000"/>
<!-- status bar icons -->
<path d="M8 1155l3-13h13l-3 13z" fill="none" stroke="#fff"/>
<circle cx="733" cy="1149" r="8" fill="#fff"/><path d="M730 1157c0-2 1-3 1-3-2 0-4-2-4-4 0-2 1-3 1-3 0-1 1-1 2 0h6c1-1 2-1 2 0 0 0 1 1 1 3 0 2-2 4-4 4 0 0 1 1 1 3z" fill="#40528c"/>
<path d="M1231 1157v-12m-4 4l4-5 4 5" stroke="#e8ebf8" stroke-width="2" fill="none"/>
<path d="M1282 1156l2-5 7-7 3 3-7 7z" fill="#e8ebf8"/>
<path d="M1337 1141l7 7-7 7-7-7z" fill="#e8ebf8"/><circle cx="1337" cy="1145" r="1.300" fill="#40528c"/><circle cx="1337" cy="1151" r="1.300" fill="#40528c"/>
<path d="M1464 1145l6 5v7M1476 1145l-6 5" fill="none" stroke="#e8ebf8" stroke-width="1.400"/>
<path d="M1525 1151l4-4 4 4z" fill="#fff"/>
<path d="M1562 1154h12l-2-3v-4a4 4 0 0 0-8 0v4z" fill="#c8cee6"/><circle cx="1575.500" cy="1152" r="6" fill="#e81123"/><text x="1575.500" y="1156" font-family="Liberation Sans" font-size="10" fill="#fff" text-anchor="middle">3</text>
<!-- taskbar icons -->
<path d="M16 1174l7-1v7h-7zM24.500 1172.500l7.500-1v8.500h-7.500zM16 1181h7v7l-7-1zM24.500 1181h7.500v8l-7.500-1z" fill="#fff"/>
<path d="M66 1172h8M65 1175h10v9h-10zM66 1187h8M78 1172v3M78 1178v10" fill="none" stroke="#fff" stroke-width="1.300"/>
<g id="fd"><path d="M111 1172h8l2 2h12v15h-22z" fill="#f5c94e"/><path d="M111 1175h22v3h-22z" fill="#e8b23a"/><path d="M115 1189v-6h4v-3h6v3h4v6h-4v-3h-6v3z" fill="#3b8fd0"/></g>
<use href="#fd" x="188"/>
<circle cx="169" cy="1180" r="10" fill="#f0562f"/><path d="M169 1168c3 3 8 5 10 11 1 6-3 11-8 11" fill="#fbb52c"/><circle cx="169" cy="1179" r="5" fill="#6a2fb0"/><circle cx="167" cy="1178" r="3" fill="#c84fb8"/>
<path d="M208 1172l18-2-2 17-16 1z" fill="#6f8a4a"/><path d="M208 1172l9-1v8l-9 1z" fill="#c85a3a"/><path d="M217 1180l8-1-1 8-7 1z" fill="#e8b23a"/><circle cx="213" cy="1178" r="4.500" fill="#cfe6f8" stroke="#eee"/><path d="M216 1182l5 5" stroke="#ddd" stroke-width="2"/>
<path d="M251 1168h21l3 3v18h-24z" fill="#10107a"/><rect x="256" y="1168" width="11" height="6" fill="#ddd"/><rect x="254" y="1176" width="18" height="10" fill="#f03a3a"/><path d="M254 1178h18M254 1181h18M254 1184h18" stroke="#fff"/>
<rect x="346" y="1169" width="21" height="21" fill="#0d1b3f" stroke="#6fb1e8" stroke-width="1.500"/><text x="356.500" y="1185" font-family="Liberation Sans" font-size="13" font-weight="bold" fill="#6fb1e8" text-anchor="middle">Ps</text>
<path d="M391 1182l8-3 4-6c5 0 11 3 11 9a7 7 0 0 1-14 1z" fill="#e8731b"/><circle cx="406" cy="1181" r="4" fill="#fff"/><circle cx="406" cy="1181" r="2.200" fill="#265787"/>
<path d="M439 1185v-6a11 11 0 0 1 22 0v6" fill="none" stroke="#1414c8" stroke-width="2.500"/><circle cx="450" cy="1181" r="7" fill="#e8a030"/><path d="M443 1182h14" stroke="#d42020" stroke-width="2.500"/><rect x="436" y="1179" width="4" height="9" rx="2" fill="#1414c8"/><rect x="460" y="1179" width="4" height="9" rx="2" fill="#1414c8"/>
<path d="M485 1169h18v21h-18z" fill="#e8e8e0"/><path d="M485 1177h18v13h-18z" fill="#7cb83a"/><path d="M490 1174v10M493 1175v5h4" stroke="#333" fill="none"/><path d="M505 1168l-7 14" stroke="#e0a020" stroke-width="2.500"/>
<rect x="529" y="1170" width="22" height="19" fill="#000" stroke="#777"/><text x="532" y="1177" font-family="Liberation Mono" font-size="6" fill="#ccc">C:\</text><path d="M540 1180h8" stroke="#ccc"/>
<ellipse cx="587" cy="1180" rx="8" ry="7" fill="#c88a20"/><circle cx="587" cy="1181" r="4" fill="#e8d8b0"/><path d="M577 1171l5 4M597 1171l-5 4M587 1168v4" stroke="#e8a020" stroke-width="2"/><circle cx="587" cy="1181" r="1.500" fill="#b01818"/>
<rect x="622" y="1168" width="9" height="12" fill="#d8b060"/><path d="M634 1170h6v6M622 1184v6h6" stroke="#3a9a3a" fill="none" stroke-dasharray="2 1"/><path d="M631 1188l9-9M634 1178l8 10" stroke="#ccc" stroke-width="2.500"/>
<path d="M668 1180c3-6 8-4 10 0s7 6 10 0-7-6-10 0-7 6-10 0z" fill="none" stroke="#3d6fc8" stroke-width="3"/>
<path d="M714 1174h12v-5h8v15h-8v5h-12z" fill="none" stroke="#7cb83a" stroke-width="3"/><rect x="720" y="1175" width="9" height="9" fill="#e8a020"/>
<rect x="761" y="1176" width="22" height="14" fill="#eee"/><path d="M761 1171h22l-1 5h-21z" fill="#333"/><text x="772" y="1188" font-family="Liberation Sans" font-size="10" font-weight="bold" fill="#c02020" text-anchor="middle">321</text>
<circle cx="817" cy="1180" r="11" fill="#1e8ad0"/><path d="M809 1176c5-1 11 1 14 5-4 0-4 3-7 3-3-2-6-5-7-8z" fill="#fff"/>
<ellipse cx="863" cy="1180" rx="10" ry="12" fill="#d81c1c"/><ellipse cx="863" cy="1180" rx="4" ry="9" fill="#2f2c25"/>
<path fill-rule="evenodd" fill="#7b5fc9" d="M914 1168L904 1178L900 1175L897 1176V1184L900 1185L904 1182L914 1192L921 1189V1171ZM914 1174V1186L907 1180Z"/>
<rect x="945" y="1170" width="12" height="12" fill="#3a8ad0"/><path d="M945 1170h12v5h-12z" fill="#d8a030"/><circle cx="951" cy="1177" r="3" fill="#3a9a3a"/><rect x="957" y="1176" width="9" height="14" fill="#ccc" stroke="#777"/>
<rect x="989" y="1170" width="23" height="21" rx="2" fill="#111" stroke="#555"/><text x="1000.500" y="1186" font-family="Liberation Sans" font-size="12" font-weight="bold" fill="#ddd" text-anchor="middle">mR</text>
<circle cx="1047" cy="1180" r="11" fill="#000"/><path d="M1040 1173l10 5 3-7M1050 1178l-3 10" stroke="#2aa0e8" stroke-width="2" fill="none"/><circle cx="1050" cy="1178" r="2.500" fill="#2aa0e8"/>
<path d="M1084 1172l13-2 4 18-16 2z" fill="#a8dcd8"/><path d="M1084 1172l-2 16 3 2z" fill="#6aa8a8"/>
<g stroke="#eee" stroke-width="3.500" fill="none"><path d="M1130 1172l18 16M1148 1172l-18 16M1139 1170v20M1129 1180h20"/></g><circle cx="1139" cy="1180" r="2" fill="#2f2c25"/>
<path d="M1176 1174l9-2 8 2v12l-8 3-9-3z" fill="#c8c8d0"/><path d="M1185 1172v17" stroke="#666"/><path d="M1180 1177l2 5M1188 1177v5" stroke="#3a6fc8" stroke-width="1.500"/>
<path fill-rule="evenodd" fill="#7b5fc9" d="M1236 1168L1226 1178L1222 1175L1219 1176V1184L1222 1185L1226 1182L1236 1192L1243 1189V1171ZM1236 1174V1186L1229 1180Z"/>
<rect x="1265" y="1169" width="23" height="22" fill="#b01818"/><text x="1276.500" y="1187" font-family="Liberation Sans" font-size="17" font-weight="bold" font-style="italic" fill="#fff" text-anchor="middle">Fz</text>
<!-- tray -->
<rect x="1307" y="1171" width="16" height="18" fill="#111"/><text x="1315" y="1187" font-family="Liberation Sans" font-size="17" font-weight="bold" fill="#e82020" text-anchor="middle">?</text><path d="M1307 1172l5 3v10l-5 3z" fill="#2020c8"/>
<path d="M1331 1188l4-14h8l4 14z" fill="#6aa83a"/><path d="M1339 1171l6 12h-12z" fill="#f0d020"/><path d="M1339 1176v4" stroke="#222"/>
<circle cx="1364" cy="1179" r="7.500" fill="none" stroke="#fff"/><path d="M1357 1179h15M1364 1172c-4 4-4 10 0 15M1364 1172c4 4 4 10 0 15" stroke="#fff" fill="none"/><circle cx="1370" cy="1186" r="3" fill="#2f2c25" stroke="#fff"/>
<rect x="1382" y="1170" width="10" height="20" rx="4" fill="#d8d8d8"/><path d="M1387 1170v6" stroke="#888"/>
<path d="M1404 1177h3l4-4v14l-4-4h-3zM1414 1176c2 2 2 6 0 8M1417 1173c3 4 3 10 0 14" fill="none" stroke="#fff"/>
<path d="M1435 1172l8 8-8 8-8-8z" fill="#d81c1c"/>
<path d="M1559 1170h15v13h-9l-3 3v-3h-3z" fill="#fff"/><path d="M1562 1174h9M1562 1177h9M1562 1180h6" stroke="#2f2c25"/><circle cx="1573" cy="1187" r="8" fill="#2f2c25" stroke="#ccc"/><text x="1573" y="1191" font-family="Liberation Sans" font-size="11" fill="#fff" text-anchor="middle">5</text>
</svg>

<!-- activate windows overlay -->
<span class="x" style="left:1295px;top:1060px;font-size:20px;line-height:26px;color:rgba(170,170,175,.7)">Activate Windows</span>
<span class="x" style="left:1295px;top:1086px;font-size:14.900px;line-height:18px;color:rgba(170,170,175,.7)">Go to Settings to activate Windows.</span>
</body></html>
